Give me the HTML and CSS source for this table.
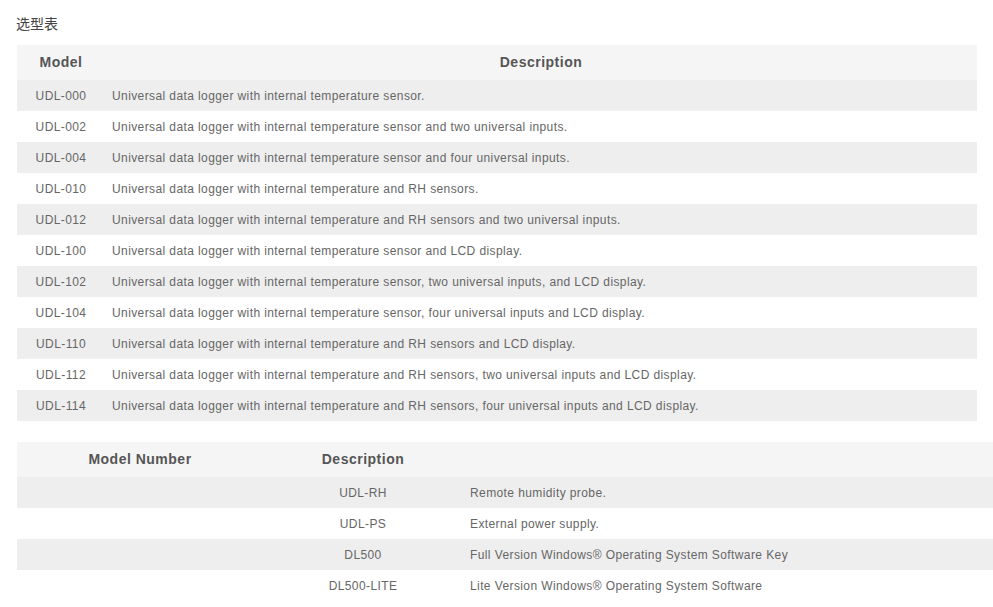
FILE: index.html
```html
<!DOCTYPE html>
<html>
<head>
<meta charset="utf-8">
<link rel="stylesheet" href="styles.css">
</head>
<body>
<div class="page">
  <h2 class="title">选型表</h2>
  <table class="spec spec-models">
    <colgroup><col class="c-model"><col></colgroup>
    <thead>
      <tr><th>Model</th><th>Description</th></tr>
    </thead>
    <tbody>
      <tr><td class="center">UDL-000</td><td>Universal data logger with internal temperature sensor.</td></tr>
      <tr><td class="center">UDL-002</td><td>Universal data logger with internal temperature sensor and two universal inputs.</td></tr>
      <tr><td class="center">UDL-004</td><td>Universal data logger with internal temperature sensor and four universal inputs.</td></tr>
      <tr><td class="center">UDL-010</td><td>Universal data logger with internal temperature and RH sensors.</td></tr>
      <tr><td class="center">UDL-012</td><td>Universal data logger with internal temperature and RH sensors and two universal inputs.</td></tr>
      <tr><td class="center">UDL-100</td><td>Universal data logger with internal temperature sensor and LCD display.</td></tr>
      <tr><td class="center">UDL-102</td><td>Universal data logger with internal temperature sensor, two universal inputs, and LCD display.</td></tr>
      <tr><td class="center">UDL-104</td><td>Universal data logger with internal temperature sensor, four universal inputs and LCD display.</td></tr>
      <tr><td class="center">UDL-110</td><td>Universal data logger with internal temperature and RH sensors and LCD display.</td></tr>
      <tr><td class="center">UDL-112</td><td>Universal data logger with internal temperature and RH sensors, two universal inputs and LCD display.</td></tr>
      <tr><td class="center">UDL-114</td><td>Universal data logger with internal temperature and RH sensors, four universal inputs and LCD display.</td></tr>
    </tbody>
  </table>

  <table class="spec spec-acc">
    <colgroup><col class="c-a"><col class="c-b"><col></colgroup>
    <thead>
      <tr><th>Model Number</th><th>Description</th><th></th></tr>
    </thead>
    <tbody>
      <tr><td></td><td class="center">UDL-RH</td><td>Remote humidity probe.</td></tr>
      <tr><td></td><td class="center">UDL-PS</td><td>External power supply.</td></tr>
      <tr><td></td><td class="center">DL500</td><td>Full Version Windows® Operating System Software Key</td></tr>
      <tr><td></td><td class="center">DL500-LITE</td><td>Lite Version Windows® Operating System Software</td></tr>
    </tbody>
  </table>
</div>
</body>
</html>
```
FILE: styles.css
```css
html, body {
  margin: 0;
  padding: 0;
  background: #fff;
}
body {
  font-family: "Liberation Sans", Arial, "Noto Sans CJK SC", sans-serif;
  color: #555;
}
.page {
  padding: 14px 0 0 17px;
}
.title {
  margin: 0 0 11px -1px;
  font-size: 14px;
  font-weight: normal;
  line-height: 20px;
  color: #444;
  font-family: "Liberation Sans", "Noto Sans CJK SC", sans-serif;
}
.spec {
  border-collapse: collapse;
  table-layout: fixed;
  font-size: 12px;
}
.spec-models {
  width: 960px;
  margin-bottom: 21px;
}
.spec-acc {
  width: 976px;
}
.c-model { width: 88px; }
.c-a { width: 246px; }
.c-b { width: 200px; }
.spec th {
  background: #f5f5f5;
  height: 33px;
  padding: 0 0 2px;
  font-size: 14px;
  font-weight: bold;
  letter-spacing: 0.5px;
  color: #555;
  text-align: center;
  vertical-align: middle;
}
.spec td {
  height: 30px;
  padding: 1px 0 0 7px;
  line-height: 17px;
  letter-spacing: 0.4px;
  color: #666;
  vertical-align: middle;
  text-align: left;
  white-space: nowrap;
}
.spec td.center {
  text-align: center;
  padding: 1px 0 0;
}
.spec tbody tr:nth-child(odd) td {
  background: #eee;
}
```
